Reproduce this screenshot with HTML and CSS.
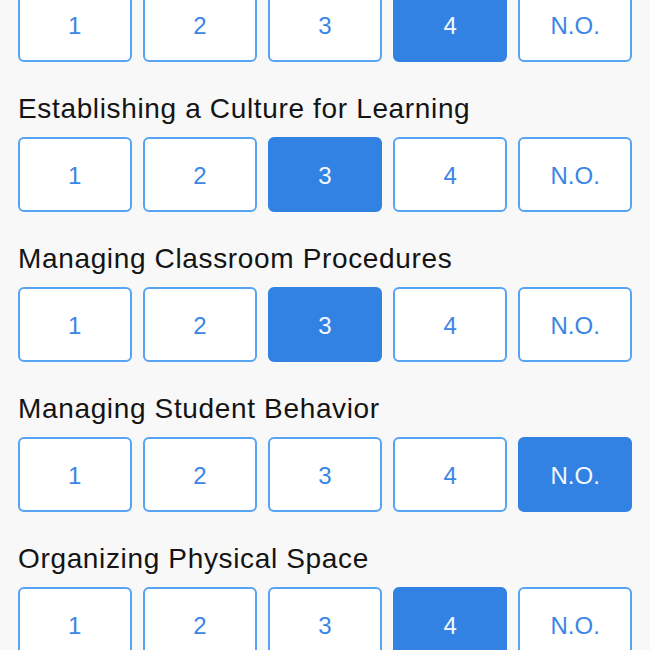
FILE: index.html
```html
<!DOCTYPE html>
<html>
<head>
<meta charset="utf-8">
<link rel="stylesheet" href="styles.css">
</head>
<body>
<div class="page">
  <section class="item first">
    <div class="choices">
      <button class="choice">1</button>
      <button class="choice">2</button>
      <button class="choice">3</button>
      <button class="choice selected">4</button>
      <button class="choice">N.O.</button>
    </div>
  </section>
  <section class="item">
    <h2 class="label">Establishing a Culture for Learning</h2>
    <div class="choices">
      <button class="choice">1</button>
      <button class="choice">2</button>
      <button class="choice selected">3</button>
      <button class="choice">4</button>
      <button class="choice">N.O.</button>
    </div>
  </section>
  <section class="item">
    <h2 class="label">Managing Classroom Procedures</h2>
    <div class="choices">
      <button class="choice">1</button>
      <button class="choice">2</button>
      <button class="choice selected">3</button>
      <button class="choice">4</button>
      <button class="choice">N.O.</button>
    </div>
  </section>
  <section class="item">
    <h2 class="label">Managing Student Behavior</h2>
    <div class="choices">
      <button class="choice">1</button>
      <button class="choice">2</button>
      <button class="choice">3</button>
      <button class="choice">4</button>
      <button class="choice selected">N.O.</button>
    </div>
  </section>
  <section class="item">
    <h2 class="label">Organizing Physical Space</h2>
    <div class="choices">
      <button class="choice">1</button>
      <button class="choice">2</button>
      <button class="choice">3</button>
      <button class="choice selected">4</button>
      <button class="choice">N.O.</button>
    </div>
  </section>
</div>
</body>
</html>
```
FILE: styles.css
```css
html, body {
  margin: 0;
  padding: 0;
  background: #f8f8f8;
  overflow: hidden;
}
body {
  font-family: "Liberation Sans", Arial, sans-serif;
}
.page {
  padding: 0 18px;
  margin-top: -13px;
}
.label {
  margin: 0;
  padding-top: 30px;
  margin-bottom: 11px;
  font-size: 28px;
  line-height: 34px;
  font-weight: normal;
  letter-spacing: 0.65px;
  color: #141414;
  white-space: nowrap;
}
.choices {
  display: grid;
  grid-template-columns: repeat(5, 1fr);
  gap: 11.5px;
}
.choice {
  height: 75px;
  margin: 0;
  padding: 2px 0 0;
  box-sizing: border-box;
  background: #ffffff;
  border: 2px solid #57a3f4;
  border-radius: 6px;
  color: #3a86e4;
  font-family: "Liberation Sans", Arial, sans-serif;
  font-size: 24px;
  line-height: 1;
}
.choice.selected {
  background: #3282e4;
  border-color: #3282e4;
  color: #f4f8fe;
}
```
